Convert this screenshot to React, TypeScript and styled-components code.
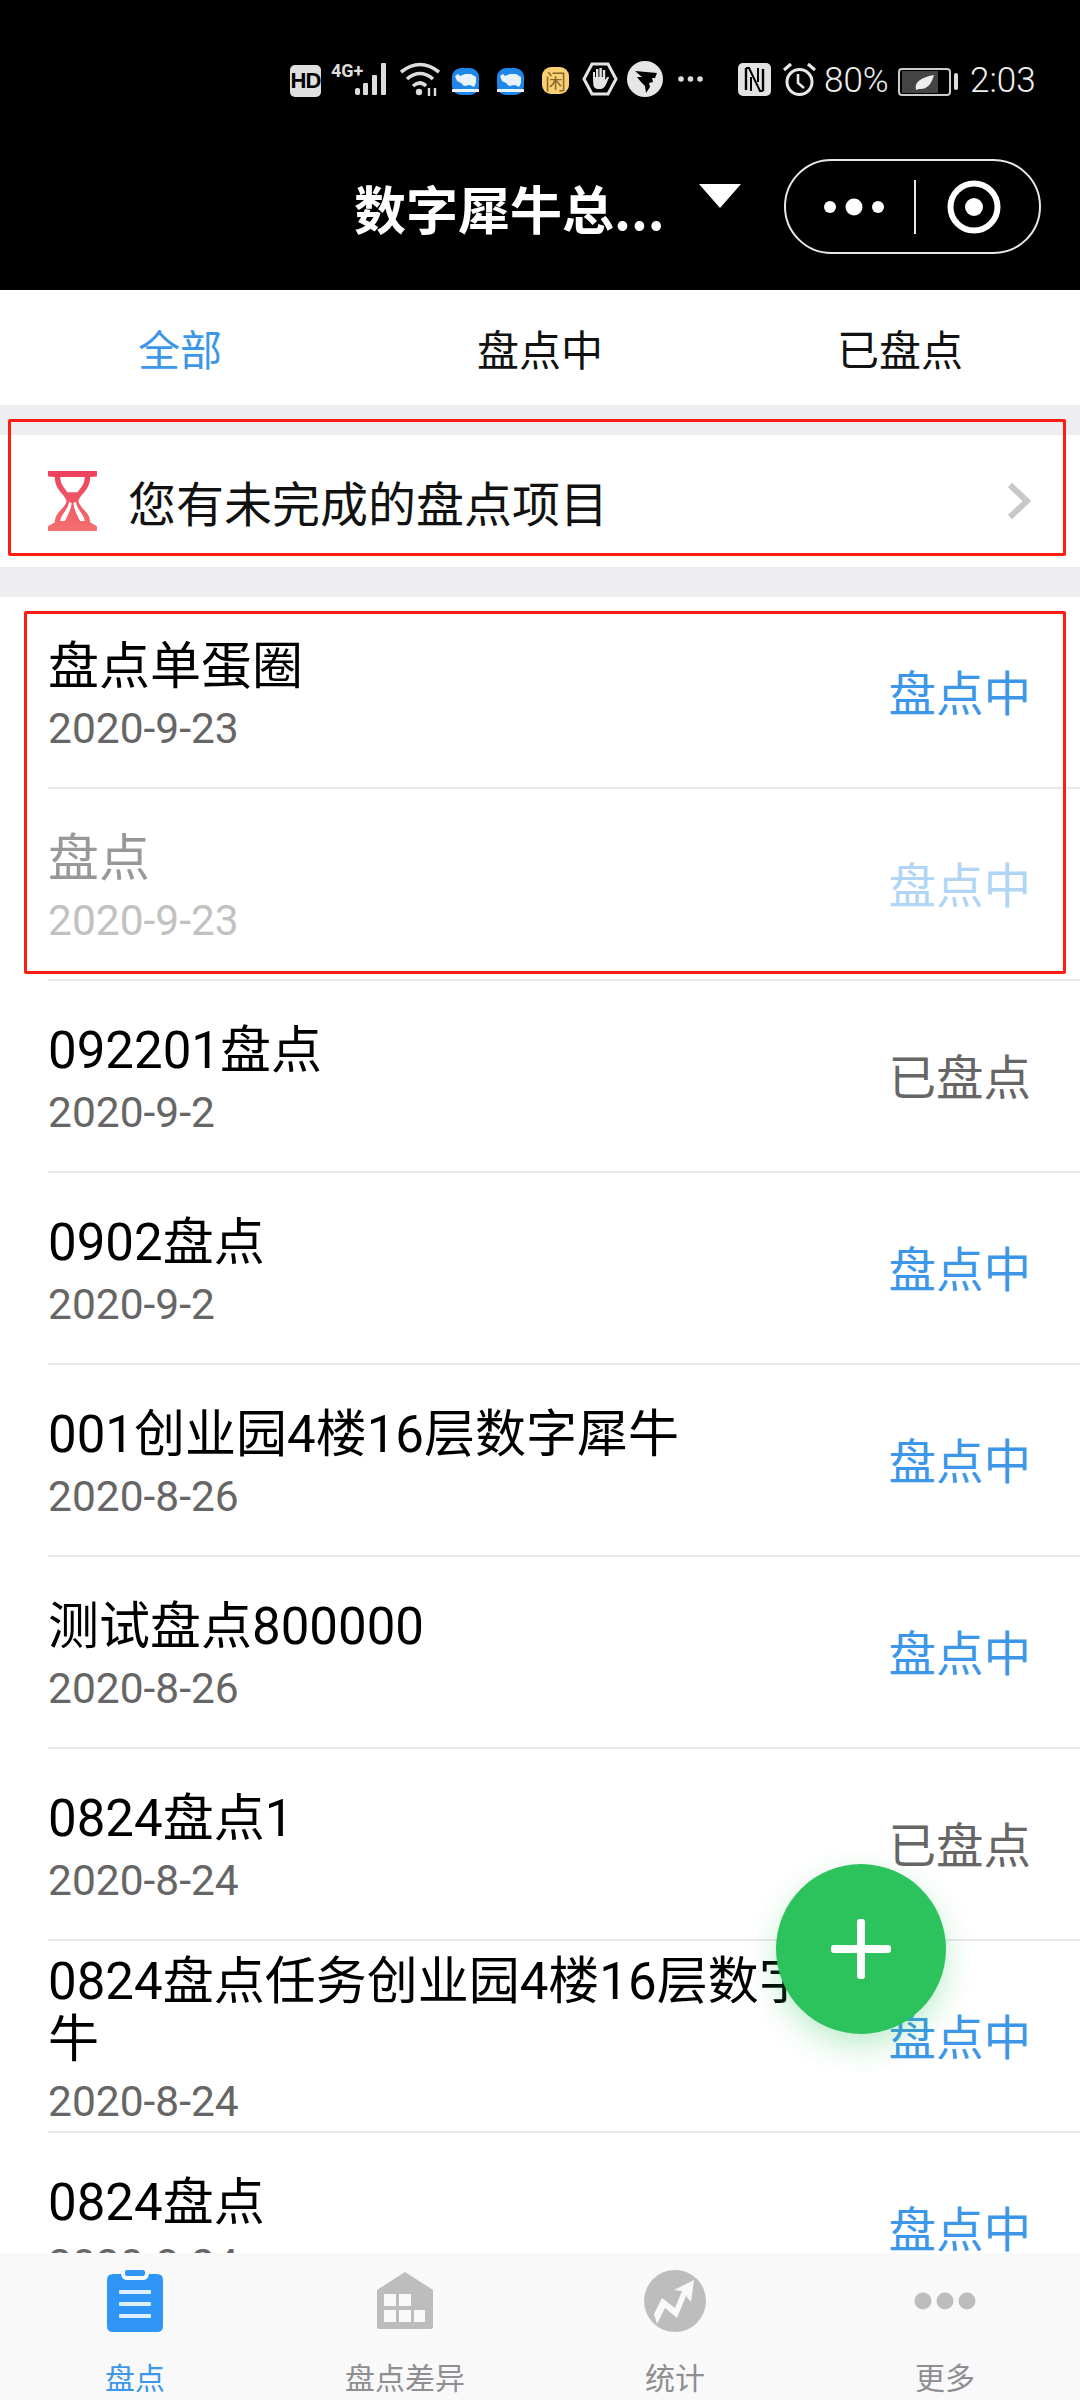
import styled, { createGlobalStyle } from 'styled-components';

const GlobalStyle = createGlobalStyle`
  html, body {
    margin: 0;
    padding: 0;
    background: #fff;
    font-family: Roboto, "Noto Sans CJK SC", sans-serif;
  }
`;

const Page = styled.div`
  position: relative;
  width: 1080px;
  height: 2400px;
  display: flex;
  flex-direction: column;
  overflow: hidden;
`;

const Header = styled.header`
  height: 290px;
  flex: none;
  background: #000;
  color: #fff;
`;

const StatusBar = styled.div`
  height: 36px;
  padding: 61px 0 0 290px;
  display: flex;
  align-items: flex-start;
`;

const Slot = styled.div<{ $gap?: number }>`
  margin-left: ${(p) => p.$gap ?? 0}px;
  height: 36px;
  display: flex;
  align-items: center;
  flex: none;
  svg {
    display: block;
  }
`;

const HdBadge = styled.div`
  width: 31px;
  height: 32px;
  margin-top: 4px;
  border-radius: 5px;
  background: #dedede;
  color: #000;
  font: 700 22px/32px "Liberation Sans", sans-serif;
  text-align: center;
  letter-spacing: -1px;
`;

const RhinoIcon = styled.svg`
  margin-top: 4px;
`;

const BatteryIcon = styled.svg`
  margin-top: 5px;
`;

const YellowApp = styled.div`
  width: 27px;
  height: 27px;
  margin-top: 2px;
  border-radius: 9px;
  background: #fbcf73;
  color: #8a6a2a;
  font: 400 21px/27px "Noto Sans CJK SC", sans-serif;
  text-align: center;
`;

const StatusText = styled.div<{ $width: number }>`
  width: ${(p) => p.$width}px;
  margin-top: 3px;
  font: 300 35px/36px Roboto, sans-serif;
  color: #f0f0f0;
  white-space: nowrap;
`;

const NavBar = styled.div`
  height: 95px;
  margin-top: 62px;
  padding: 0 39px 0 354px;
  display: flex;
  align-items: flex-start;
`;

const NavTitle = styled.div`
  width: 305px;
  margin-top: 14px;
  font: 700 52px/70px "Noto Sans CJK SC", sans-serif;
  color: #fff;
  white-space: nowrap;
`;

const Caret = styled.div`
  width: 0;
  height: 0;
  margin: 25px 0 0 40px;
  border-left: 21px solid transparent;
  border-right: 21px solid transparent;
  border-top: 24px solid #fff;
`;

const Capsule = styled.div`
  width: 257px;
  height: 95px;
  margin-left: auto;
  box-sizing: border-box;
  border: 2px solid #e8e8e8;
  border-radius: 48px;
  svg {
    display: block;
  }
`;

const Filters = styled.nav`
  height: 115px;
  flex: none;
  display: grid;
  grid-template-columns: repeat(3, 1fr);
  align-items: center;
  background: #fff;
`;

const Filter = styled.div<{ $active?: boolean }>`
  text-align: center;
  font: 400 42px/60px "Noto Sans CJK SC", sans-serif;
  color: ${(p) => (p.$active ? '#3d97e8' : '#111')};
`;

const Band = styled.div`
  height: 30px;
  flex: none;
  background: #eeeef0;
`;

const Notice = styled.div`
  height: 132px;
  flex: none;
  display: flex;
  align-items: center;
  padding: 0 48px;
  background: #fff;
`;

const NoticeText = styled.div`
  margin-left: 31px;
  flex: 1;
  font: 400 48px/60px "Noto Sans CJK SC", sans-serif;
  color: #111;
`;

const List = styled.main`
  flex: 1;
  min-height: 0;
  overflow: hidden;
  background: #fff;
`;

const Row = styled.div<{ $faded?: boolean }>`
  height: 192px;
  box-sizing: border-box;
  margin-left: 48px;
  padding-right: 49px;
  display: flex;
  align-items: center;
  justify-content: space-between;
  border-bottom: 2px solid #e9e9e9;
  & > * {
    opacity: ${(p) => (p.$faded ? 0.4 : 1)};
  }
`;

const RowText = styled.div`
  width: 820px;
  padding-top: 8px;
`;

const RowTitle = styled.div`
  font: 400 51px/58px Roboto, "Noto Sans CJK SC", sans-serif;
  color: #000;
`;

const RowDate = styled.div`
  margin-top: 8px;
  font: 400 42.5px/50px Roboto, sans-serif;
  color: #666;
`;

const RowStatus = styled.div<{ $done?: boolean }>`
  padding-bottom: 3px;
  font: 400 47.5px/60px "Noto Sans CJK SC", sans-serif;
  color: ${(p) => (p.$done ? '#666' : '#3d97e8')};
  white-space: nowrap;
`;

const Fab = styled.div`
  position: absolute;
  left: 776px;
  top: 1864px;
  width: 170px;
  height: 170px;
  border-radius: 50%;
  background: #2cc25c;
  box-shadow: 0 12px 30px rgba(44, 194, 92, 0.3);
  display: flex;
  align-items: center;
  justify-content: center;
`;

const TabBar = styled.footer`
  height: 147px;
  flex: none;
  position: relative;
  display: grid;
  grid-template-columns: repeat(4, 1fr);
  background: #f9f9f9;
`;

const Tab = styled.div`
  display: flex;
  flex-direction: column;
  align-items: center;
  padding-top: 17px;
`;

const TabIcon = styled.div`
  height: 62px;
  display: flex;
  align-items: center;
`;

const TabLabel = styled.div<{ $active?: boolean }>`
  margin-top: 24px;
  font: 400 30px/40px "Noto Sans CJK SC", sans-serif;
  color: ${(p) => (p.$active ? '#3d97e8' : '#8e8e93')};
`;

const Highlight = styled.div<{ $left: number; $top: number; $width: number; $height: number }>`
  position: absolute;
  left: ${(p) => p.$left}px;
  top: ${(p) => p.$top}px;
  width: ${(p) => p.$width}px;
  height: ${(p) => p.$height}px;
  box-sizing: border-box;
  border: 3px solid #ff1c10;
  border-radius: 2px;
  pointer-events: none;
`;

const Rhino = () => (
  <RhinoIcon width="27" height="27" viewBox="0 0 27 27">
    <rect width="27" height="27" rx="9" fill="#1f86ea" />
    <path d="M3 8 L6 6 L8 8 L13 6 L19 6 L24 9 L24 15 L22 19 L18 17 L12 18 L9 15 L5 13 Z" fill="#e9f3fb" />
    <rect x="0" y="21" width="27" height="3" fill="#e9f3fb" />
  </RhinoIcon>
);

const rows = [
  { title: '盘点单蛋圈', date: '2020-9-23' },
  { title: '盘点', date: '2020-9-23', faded: true },
  { title: '092201盘点', date: '2020-9-2', done: true },
  { title: '0902盘点', date: '2020-9-2' },
  { title: '001创业园4楼16层数字犀牛', date: '2020-8-26' },
  { title: '测试盘点800000', date: '2020-8-26' },
  { title: '0824盘点1', date: '2020-8-24', done: true },
  { title: '0824盘点任务创业园4楼16层数字犀牛', date: '2020-8-24' },
  { title: '0824盘点', date: '2020-8-24' },
];

export default function App() {
  return (
    <Page>
      <GlobalStyle />
      <Header>
        <StatusBar>
          <Slot>
            <HdBadge>HD</HdBadge>
          </Slot>
          <Slot $gap={10}>
            <svg width="59" height="36" viewBox="0 0 59 36">
              <text x="0" y="16" fontFamily="Roboto, sans-serif" fontWeight="700" fontSize="18" fill="#ddd">4G+</text>
              <g fill="#ddd">
                <rect x="24" y="27" width="5" height="7" rx="2" />
                <rect x="32" y="22" width="5" height="12" rx="1" />
                <rect x="41" y="14" width="5" height="20" rx="1" />
                <rect x="50" y="2" width="5" height="32" rx="1" />
              </g>
            </svg>
          </Slot>
          <Slot $gap={10}>
            <svg width="40" height="36" viewBox="0 0 40 36" fill="none" stroke="#ddd" strokeWidth="3.6">
              <path d="M1 11 Q20 -4 39 11" />
              <path d="M7 18 Q20 7 33 18" />
              <path d="M13 25 Q20 19 26 25" />
              <circle cx="19" cy="31" r="3.2" fill="#ddd" stroke="none" />
              <path d="M29 27 v8 M35 27 v8" strokeWidth="2.4" />
            </svg>
          </Slot>
          <Slot $gap={12}>
            <Rhino />
          </Slot>
          <Slot $gap={18}>
            <Rhino />
          </Slot>
          <Slot $gap={18}>
            <YellowApp>闲</YellowApp>
          </Slot>
          <Slot $gap={13}>
            <svg width="36" height="34" viewBox="0 0 36 34">
              <path d="M10 2 H26 L34 17 L26 32 H10 L2 17 Z" fill="none" stroke="#e4e4e4" strokeWidth="3" />
              <path d="M11 15 V10 h2 v5 h1 V7 h2.4 v8 h1 V6 h2.4 v9 h1 V8 h2.4 v10 l2 -3 h2 l-3 7 q-2 5 -6 5 h-2 q-5 0 -5 -6 Z" fill="#e4e4e4" />
            </svg>
          </Slot>
          <Slot $gap={9}>
            <svg width="36" height="36" viewBox="0 0 36 36">
              <circle cx="18" cy="18" r="18" fill="#e6e6e6" />
              <path d="M8 10 L30 12 L28 17 L25 17 L26 21 L22 22 L23 26 L19 32 L18 25 L14 21 L10 16 L15 16 Z" fill="#000" />
            </svg>
          </Slot>
          <Slot $gap={15}>
            <svg width="25" height="6" viewBox="0 0 25 6" fill="#ddd">
              <circle cx="3" cy="3" r="2.8" />
              <circle cx="12.5" cy="3" r="2.8" />
              <circle cx="22" cy="3" r="2.8" />
            </svg>
          </Slot>
          <Slot $gap={35}>
            <svg width="33" height="33" viewBox="0 0 33 33">
              <rect width="33" height="33" rx="5" fill="#e2e2e2" />
              <path d="M8 5 V27 M25 6 V28" stroke="#000" strokeWidth="2.4" fill="none" />
              <path d="M8 5 H11 L22 28 H25 M13 14 V28 M20 5 V19" stroke="#000" strokeWidth="2" fill="none" />
            </svg>
          </Slot>
          <Slot $gap={12}>
            <svg width="33" height="33" viewBox="0 0 33 33" fill="none" stroke="#e8e8e8" strokeWidth="3">
              <circle cx="16.5" cy="19" r="12.5" />
              <path d="M15 11 V20 L21 25" strokeWidth="2.6" />
              <path d="M1 7 L8 1 M32 7 L25 1" strokeWidth="3.2" />
            </svg>
          </Slot>
          <Slot $gap={8}>
            <StatusText $width={63}>80%</StatusText>
          </Slot>
          <Slot $gap={11}>
            <BatteryIcon width="60" height="28" viewBox="0 0 60 28">
              <rect x="1" y="1" width="51" height="26" rx="3" fill="none" stroke="#ccc" strokeWidth="2" />
              <rect x="4" y="3" width="36" height="22" fill="#444" />
              <path d="M18 22 Q15 11 36 7 Q32 22 21 21 Z" fill="#eee" />
              <rect x="56" y="5" width="4" height="17" rx="2" fill="#ddd" />
            </BatteryIcon>
          </Slot>
          <Slot $gap={12}>
            <StatusText $width={68}>2:03</StatusText>
          </Slot>
        </StatusBar>
        <NavBar>
          <NavTitle>数字犀牛总...</NavTitle>
          <Caret />
          <Capsule>
            <svg width="253" height="91" viewBox="0 0 253 91">
              <g fill="#fff">
                <circle cx="44" cy="46" r="6" />
                <circle cx="68" cy="46" r="8.5" />
                <circle cx="92" cy="46" r="6" />
                <circle cx="188" cy="46" r="9" />
              </g>
              <rect x="128" y="19" width="2" height="54" fill="#e8e8e8" />
              <circle cx="188" cy="46" r="23.5" fill="none" stroke="#fff" strokeWidth="6" />
            </svg>
          </Capsule>
        </NavBar>
      </Header>
      <Filters>
        <Filter $active>全部</Filter>
        <Filter>盘点中</Filter>
        <Filter>已盘点</Filter>
      </Filters>
      <Band />
      <Notice>
        <svg width="49" height="60" viewBox="0 0 145 178">
          <defs>
            <linearGradient id="glass" x1="0" y1="0" x2="0" y2="1">
              <stop offset="0" stopColor="#ee3f5c" />
              <stop offset="1" stopColor="#f47070" />
            </linearGradient>
          </defs>
          <path
            fill="url(#glass)"
            d="M0 0H145V16L125 18C125 58 95 68 90 90C95 112 125 122 125 152L145 164V178H0V164L20 152C20 122 50 112 55 90C50 68 20 58 20 18L0 16Z"
          />
          <g fill="#fff">
            <path d="M36 18H109C108 42 96 50 88 63H57C49 50 37 42 36 18Z" />
            <path d="M62 92C60 115 40 125 36 148L50 148C60 128 68 115 70 95Z" />
            <path d="M83 92C85 115 105 125 109 148L95 148C85 128 77 115 75 95Z" />
          </g>
        </svg>
        <NoticeText>您有未完成的盘点项目</NoticeText>
        <svg width="26" height="38" viewBox="0 0 26 38" fill="none" stroke="#c8c8c8" strokeWidth="6">
          <path d="M4 3 L21 19 L4 35" />
        </svg>
      </Notice>
      <Band />
      <List>
        {rows.map((row) => (
          <Row key={row.title} $faded={row.faded}>
            <RowText>
              <RowTitle>{row.title}</RowTitle>
              <RowDate>{row.date}</RowDate>
            </RowText>
            <RowStatus $done={row.done}>{row.done ? '已盘点' : '盘点中'}</RowStatus>
          </Row>
        ))}
      </List>
      <TabBar>
        <Tab>
          <TabIcon>
            <svg width="56" height="62" viewBox="0 0 56 62">
              <path
                fill="#3096f5"
                d="M6 4 H14 Q15 10 20 10 H36 Q41 10 42 4 H50 Q56 4 56 10 V56 Q56 62 50 62 H6 Q0 62 0 56 V10 Q0 4 6 4 Z"
              />
              <rect x="18" y="0" width="20" height="6" rx="2" fill="#3096f5" />
              <g fill="#fff" opacity="0.85">
                <rect x="12" y="20" width="32" height="4" rx="1" />
                <rect x="12" y="32" width="32" height="4" rx="1" />
                <rect x="12" y="44" width="32" height="4" rx="1" />
              </g>
            </svg>
          </TabIcon>
          <TabLabel $active>盘点</TabLabel>
        </Tab>
        <Tab>
          <TabIcon>
            <svg width="56" height="58" viewBox="0 0 56 58">
              <path fill="#bdbdbd" d="M28 0 L56 18 V55 Q56 57 54 57 H2 Q0 57 0 55 V18 Z" />
              <g fill="#f9f9f9">
                <rect x="7" y="22" width="12" height="12" />
                <rect x="22" y="22" width="12" height="12" />
                <rect x="7" y="38" width="12" height="12" />
                <rect x="22" y="38" width="12" height="12" />
                <rect x="37" y="38" width="11" height="12" />
              </g>
            </svg>
          </TabIcon>
          <TabLabel>盘点差异</TabLabel>
        </Tab>
        <Tab>
          <TabIcon>
            <svg width="62" height="62" viewBox="0 0 62 62">
              <circle cx="31" cy="31" r="31" fill="#bdbdbd" />
              <path fill="#f9f9f9" d="M10 44 L18 28 L31 38 L38 21 L30 20 L50 10 L47 32 L42 26 L33 48 L21 38 L13 54 Z" />
            </svg>
          </TabIcon>
          <TabLabel>统计</TabLabel>
        </Tab>
        <Tab>
          <TabIcon>
            <svg width="62" height="18" viewBox="0 0 62 18" fill="#bdbdbd">
              <circle cx="9" cy="9" r="8.5" />
              <circle cx="31" cy="9" r="8.5" />
              <circle cx="53" cy="9" r="8.5" />
            </svg>
          </TabIcon>
          <TabLabel>更多</TabLabel>
        </Tab>
      </TabBar>
      <Fab>
        <svg width="60" height="60" viewBox="0 0 60 60" fill="#fff">
          <rect x="26" y="0" width="8" height="60" rx="3" />
          <rect x="0" y="26" width="60" height="8" rx="3" />
        </svg>
      </Fab>
      <Highlight $left={8} $top={419} $width={1058} $height={137} />
      <Highlight $left={24} $top={611} $width={1042} $height={363} />
    </Page>
  );
}
